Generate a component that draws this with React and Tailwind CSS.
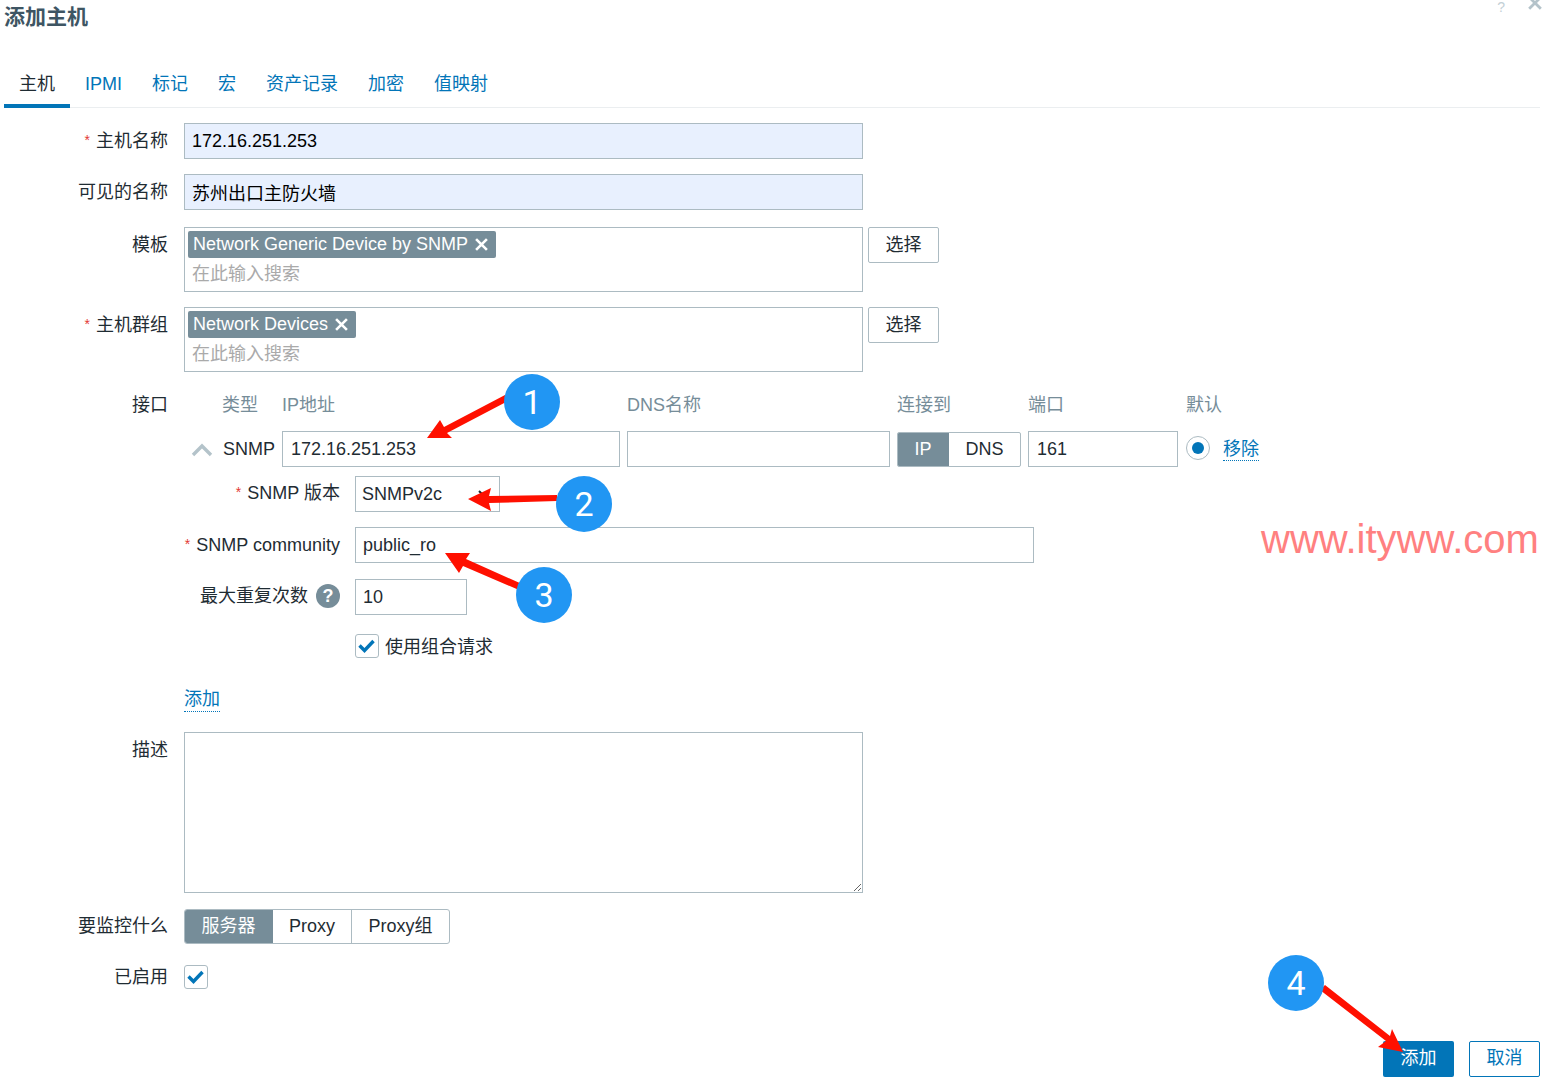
import React from "react";

const inputClass =
  "h-9 border border-[#acbbc2] px-[7px] text-[18px] text-[#1f2c33] outline-none";

const Label = ({ required, leading = "leading-9", children, className = "" }) => (
  <div
    className={`h-9 shrink-0 pr-4 text-right text-[18px] text-[#1f2c33] ${leading} ${className}`}
  >
    {required && <span className="relative -top-[2px] mr-[6px] text-[14px] text-[#e33734]">*</span>}
    {children}
  </div>
);

const Row = ({ label, required, leading, className = "", children }) => (
  <div className={`flex items-start ${className}`}>
    <Label required={required} leading={leading} className="w-[184px]">
      {label}
    </Label>
    {children}
  </div>
);

const Check = () => (
  <span className="flex h-6 w-6 shrink-0 items-center justify-center rounded-[3px] border border-[#acbbc2] bg-white">
    <svg width="22" height="22" viewBox="0 0 22 22" fill="none">
      <path d="M3.5 10.5 L8.5 15.5 L17.5 6" stroke="#0275b8" strokeWidth="3.4" />
    </svg>
  </span>
);

const X = ({ size = 13, color = "#fff", width = 2.4 }) => (
  <svg width={size} height={size} viewBox="0 0 12 12" fill="none">
    <path d="M1 1 L11 11 M11 1 L1 11" stroke={color} strokeWidth={width} />
  </svg>
);

const MultiSelect = ({ tag }) => (
  <div className="flex w-[679px] items-start">
    <div className="h-[65px] w-[679px] shrink-0 border border-[#acbbc2] pl-[3px] pt-[3px]">
      <span className="flex h-[27px] w-fit items-center gap-[7px] rounded-[2px] bg-[#768d99] pl-[5px] pr-[8px] text-[18px] text-white">
        {tag}
        <X />
      </span>
      <div className="pl-[4px] pt-[2px] text-[18px] leading-[28px] text-[#aaaaaa]">在此输入搜索</div>
    </div>
    <button className="ml-[5px] h-9 w-[71px] shrink-0 rounded-[2px] border border-[#acbbc2] text-[18px] text-[#1f2c33]">
      选择
    </button>
  </div>
);

const tabs = ["IPMI", "标记", "宏", "资产记录", "加密", "值映射"];
const ifHead = "text-[18px] leading-[26px] text-[#768d99]";

const Circle = ({ className, children }) => (
  <div
    className={`absolute flex h-14 w-14 items-center justify-center rounded-full bg-[#2196f3] font-['Roboto',sans-serif] text-[34px] text-white ${className}`}
  >
    {children}
  </div>
);

export default function App() {
  return (
    <div className="relative h-[1082px] w-[1546px] overflow-hidden bg-white font-['Liberation_Sans','Noto_Sans_CJK_SC',sans-serif]">
      {/* header */}
      <div className="flex h-[62px] items-start justify-between pl-1 pr-1">
        <h1 className="text-[21px] font-bold leading-[34px] text-[#3e5563]">添加主机</h1>
        <div className="flex items-start gap-[23px]">
          <span className="text-[14px] leading-[14px] text-[#c3d0d6]">?</span>
          <span className="-mt-[4px]">
            <X size={14} color="#b4c3ca" width={2.4} />
          </span>
        </div>
      </div>

      {/* tabs */}
      <div className="ml-1 mr-[6px] flex h-[46px] border-b border-[#ebeef0] text-[18px] text-[#0275b8]">
        <div className="-mb-px flex h-[46px] items-center border-b-4 border-[#0275b8] px-[15px] pt-[2px] text-[#1f2c33]">
          主机
        </div>
        {tabs.map((t) => (
          <div key={t} className="flex h-[42px] items-center px-[15px] pt-[2px]">
            {t}
          </div>
        ))}
      </div>

      {/* form */}
      <div className="pt-[15px]">
        <Row label="主机名称" required>
          <input
            readOnly
            value="172.16.251.253"
            className={`${inputClass} w-[679px] bg-[#e8f0fe] text-black`}
          />
        </Row>
        <Row label="可见的名称" className="mt-[15px]">
          <input
            readOnly
            value="苏州出口主防火墙"
            className={`${inputClass} w-[679px] bg-[#e8f0fe] text-black`}
          />
        </Row>
        <Row label="模板" className="mt-[17px]">
          <MultiSelect tag="Network Generic Device by SNMP" />
        </Row>
        <Row label="主机群组" required className="mt-[15px]">
          <MultiSelect tag="Network Devices" />
        </Row>

        {/* interfaces */}
        <Row label="接口" className="mt-[15px]">
          <div>
            <div className="grid grid-cols-[91px_338px_263px_124px_150px_auto] items-center gap-x-[7px] gap-y-[13px] pt-[5px]">
              <div className={`${ifHead} pl-[38px]`}>类型</div>
              <div className={ifHead}>IP地址</div>
              <div className={ifHead}>DNS名称</div>
              <div className={ifHead}>连接到</div>
              <div className={ifHead}>端口</div>
              <div className={`${ifHead} pl-[1px]`}>默认</div>

              <div className="flex items-center pl-[7px] text-[18px] text-[#1f2c33]">
                <svg width="22" height="14" viewBox="0 0 22 14" fill="none" className="mt-[1px] shrink-0">
                  <path d="M2 12 L11 3 L20 12" stroke="#b4c3ca" strokeWidth="3.4" />
                </svg>
                <span className="ml-[10px]">SNMP</span>
              </div>
              <input readOnly value="172.16.251.253" className={`${inputClass} w-full pl-[8px]`} />
              <input readOnly value="" className={`${inputClass} w-full`} />
              <div className="flex h-[35px] self-end overflow-hidden rounded-[2px] border border-[#acbbc2] text-[18px] text-[#1f2c33]">
                <span className="-my-px -ml-px flex w-[52px] items-center justify-center bg-[#768d99] text-white">IP</span>
                <span className="flex flex-1 items-center justify-center">DNS</span>
              </div>
              <input readOnly value="161" className={`${inputClass} w-full pl-[8px]`} />
              <div className="flex items-center pl-[1px]">
                <span className="-mt-[3px] flex h-6 w-6 items-center justify-center rounded-full border border-[#acbbc2]">
                  <span className="h-3 w-3 rounded-full bg-[#0275b8]" />
                </span>
                <span className="ml-[13px] border-b border-dotted border-[#0275b8] text-[18px] leading-[22px] text-[#0275b8]">
                  移除
                </span>
              </div>
            </div>

            <div className="mt-[9px] flex items-start">
              <Label required leading="leading-[34px]" className="w-[171px] pr-[15px]">SNMP 版本</Label>
              <div className="flex h-9 w-[145px] items-center justify-between border border-[#acbbc2] pl-[6px] pr-[9px] text-[18px] text-[#1f2c33]">
                SNMPv2c
                <svg width="12" height="8" viewBox="0 0 12 8" fill="none">
                  <path d="M1 1 L6 6 L11 1" stroke="#1f2c33" strokeWidth="2" />
                </svg>
              </div>
            </div>

            <div className="mt-[15px] flex items-start">
              <Label required className="w-[171px] pr-[15px]">SNMP community</Label>
              <input readOnly value="public_ro" className={`${inputClass} w-[679px]`} />
            </div>

            <div className="mt-[16px] flex items-start">
              <div className="flex h-9 w-[171px] shrink-0 items-center justify-end pb-[2px] pr-[15px] text-[18px] text-[#1f2c33]">
                最大重复次数
                <span className="ml-2 flex h-6 w-6 items-center justify-center rounded-full bg-[#768d99] text-[18px] font-bold text-white">
                  ?
                </span>
              </div>
              <input readOnly value="10" className={`${inputClass} w-[112px]`} />
            </div>

            <div className="ml-[171px] mt-[19px] flex h-6 items-center gap-[6px] text-[18px] text-[#1f2c33]">
              <Check />
              <span className="pt-[2px]">使用组合请求</span>
            </div>

            <div className="mt-[29px] flex">
              <span className="border-b border-dotted border-[#0275b8] text-[18px] leading-[24px] text-[#0275b8]">添加</span>
            </div>
          </div>
        </Row>

        <Row label="描述" className="mt-[20px]">
          <textarea readOnly value="" className="h-[161px] w-[679px] border border-[#acbbc2] outline-none" />
        </Row>

        <Row label="要监控什么" leading="leading-[34px]" className="mt-[16px]">
          <div className="flex h-[35px] overflow-hidden rounded-[3px] border border-[#acbbc2] text-[18px] text-[#1f2c33]">
            <span className="-my-px -ml-px flex w-[89px] items-center justify-center bg-[#768d99] text-white">服务器</span>
            <span className="flex w-[79px] items-center justify-center border-r border-[#acbbc2]">Proxy</span>
            <span className="flex w-[97px] items-center justify-center">Proxy组</span>
          </div>
        </Row>

        <div className="mt-[20px] flex h-6 items-center">
          <Label leading="leading-6" className="w-[184px] !h-6">已启用</Label>
          <Check />
        </div>

        <div className="mt-[52px] flex justify-end gap-[15px] pr-[6px]">
          <button className="h-9 w-[71px] rounded-[2px] bg-[#0275b8] pb-[1px] text-[18px] text-white">添加</button>
          <button className="h-9 w-[71px] rounded-[2px] border border-[#0275b8] pb-[1px] text-[18px] text-[#0275b8]">取消</button>
        </div>
      </div>

      {/* watermark */}
      <div className="absolute left-[1261px] top-[516px] text-[40px] leading-[46px] text-[#ff8080]">www.ityww.com</div>

      {/* annotations drawn over the screenshot */}
      <svg className="pointer-events-none absolute inset-0" width="1546" height="1082" fill="#ff1000" stroke="none">
        <path d="M427 438 L440 420 L444 427 L505 395 L508 401 L447 433 L452 438 Z" />
        <path d="M468 499 L491 488 L489 496 L557 495 L557 501 L489 503 L491 511 Z" />
        <path d="M445 553 L470 553 L466 559 L522 584 L519 590 L463 566 L459 573 Z" />
        <path d="M1403 1052 L1378 1047 L1386 1041 L1320 990 L1325 985 L1390 1036 L1392 1029 Z" />
      </svg>
      <Circle className="left-[504px] top-[374px]">1</Circle>
      <Circle className="left-[556px] top-[476px]">2</Circle>
      <Circle className="left-[516px] top-[567px]">3</Circle>
      <Circle className="left-[1268px] top-[955px]">4</Circle>
    </div>
  );
}
